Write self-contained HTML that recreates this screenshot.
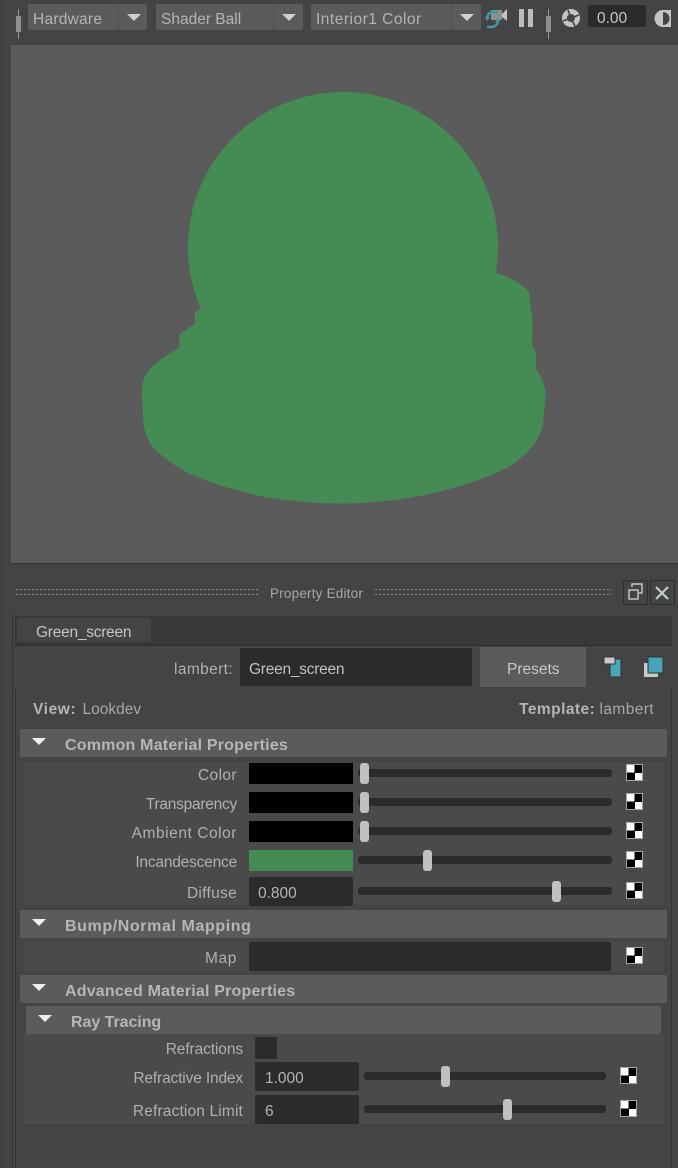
<!DOCTYPE html>
<html><head><meta charset="utf-8"><style>
html,body{margin:0;padding:0;background:#444}
#r{position:relative;width:678px;height:1168px;overflow:hidden;background:#444;font-family:"Liberation Sans",sans-serif;font-size:15.5px;color:#b4b4b4}
#r div{position:absolute}
.t{position:absolute;white-space:nowrap;line-height:20px;height:20px}
.l{text-align:right;color:#aeb0b2}
.b{font-weight:bold;font-size:16px;color:#b6b6b6}
.h{background:#5b5b5b;border-radius:2px;left:20px;width:647px;height:28px}
.a{width:0;height:0;border-left:7px solid transparent;border-right:7px solid transparent;border-top:7px solid #eee}
.g{border-top-color:#cfcfcf}
.f{background:#2b2b2b;border-radius:2px}
.tr{background:#2b2b2b;border-radius:3px;height:8px}
.hd{background:#c0c0c0;border-radius:3px;width:9px;height:21px}
.c{width:15px;height:15px;margin:1px;background:linear-gradient(#fff,#fff) 0 0/7.5px 7.5px no-repeat,linear-gradient(#fff,#fff) 7.5px 7.5px/7.5px 7.5px no-repeat,#000;outline:1px solid #a5a5a5}
</style></head><body><div id="r">
<div style="left:1px;top:0;width:1px;height:1168px;background:#383838"></div>
<svg style="position:absolute;left:0;top:0" width="678" height="44">
<rect x="18" y="9" width="1" height="30" fill="#999"/><rect x="16" y="16" width="5" height="16" fill="#8f8f8f"/>
<rect x="548" y="9" width="1" height="30" fill="#999"/><rect x="546" y="16" width="5" height="16" fill="#8f8f8f"/>
</svg>
<div style="left:28px;top:4px;width:119px;height:26px;background:#5b5b5b;border-radius:2px"></div>
<div style="left:118px;top:4px;width:1px;height:26px;background:#4f4f4f"></div>
<div class="a g" style="left:127px;top:14px"></div>
<span class="t" style="left:33px;top:10px;letter-spacing:.25px">Hardware</span>
<div style="left:156px;top:4px;width:147px;height:26px;background:#5b5b5b;border-radius:2px"></div>
<div style="left:273px;top:4px;width:1px;height:26px;background:#4f4f4f"></div>
<div class="a g" style="left:282px;top:14px"></div>
<span class="t" style="left:161px;top:10px">Shader Ball</span>
<div style="left:311px;top:4px;width:170px;height:26px;background:#5b5b5b;border-radius:2px"></div>
<div style="left:451px;top:4px;width:1px;height:26px;background:#4f4f4f"></div>
<div class="a g" style="left:460px;top:14px"></div>
<span class="t" style="left:316px;top:10px;letter-spacing:.5px">Interior1 Color</span>
<svg style="position:absolute;left:484px;top:6px" width="24" height="24">
<rect x="7" y="4" width="11" height="10" fill="#8f8f8f"/><path d="M18 8 L23 3 V15 L18 11Z" fill="#c4c4c4"/>
<path d="M3 12 Q4 6 10 6 H14" stroke="#3f9aa8" stroke-width="2.4" fill="none"/><path d="M14 15 Q13 21 7 21 H3" stroke="#3f9aa8" stroke-width="2.4" fill="none"/>
<path d="M1 11 H6 L3 15Z M11 16 H16 L14 12Z" fill="#3f9aa8"/>
</svg>
<div style="left:519px;top:9px;width:5px;height:18px;background:#bcbcbc"></div>
<div style="left:528px;top:9px;width:5px;height:18px;background:#bcbcbc"></div>
<svg style="position:absolute;left:561px;top:8px" width="20" height="20"><circle cx="10" cy="10" r="9" fill="#c4c4c4"/><path d="M10 10L7 2M10 10L18 7M10 10L14 18M10 10L2 13" stroke="#444" stroke-width="1.6"/><circle cx="10" cy="10" r="4" fill="#444"/></svg>
<div class="f" style="left:588px;top:5px;width:58px;height:22px"></div>
<span class="t" style="left:597px;top:9px;color:#c8c8c8">0.00</span>
<svg style="position:absolute;left:654px;top:8px" width="18" height="20"><rect x="9" y="2" width="8" height="17" fill="#c4c4c4"/><path d="M9 2a8.5 8.5 0 0 0 0 17z" fill="#c4c4c4"/><path d="M9 4a6.5 6.5 0 0 1 0 13z" fill="#444"/></svg>

<div style="left:11px;top:45px;width:667px;height:518px;background:#5b5b5b"></div>
<div style="left:11px;top:563px;width:667px;height:1px;background:#333"></div>
<svg style="position:absolute;left:0;top:0" width="678" height="520">
<circle cx="343" cy="247" r="155" fill="#448b54"/>
<path fill="#448b54" d="M200.3,309.3 L195,312 V324 Q186,329 179.3,335 V348 Q160,358 150,369 Q142,378 141.7,390 L143.5,423 Q145,436 152,446 Q164,460 190,474 Q222,488 265,497 Q310,504 345,503.5 Q385,503 425,495 Q475,484 507,468 Q530,453 538,438 Q543,428 543.5,420 L545.7,393 Q544,380 536,369 V353 L532,345 L532.7,323 L529,292 Q522,284 513,280 Q505,275 496,273 L440,260 H260Z"/>
</svg>

<svg style="position:absolute;left:0;top:585px" width="678" height="12">
<line x1="16" x2="258" y1="4.5" y2="4.5" stroke="#8a8a8a" stroke-dasharray="2 2"/><line x1="16" x2="258" y1="9.5" y2="9.5" stroke="#8a8a8a" stroke-dasharray="2 2"/>
<line x1="375" x2="612" y1="4.5" y2="4.5" stroke="#8a8a8a" stroke-dasharray="2 2"/><line x1="375" x2="612" y1="9.5" y2="9.5" stroke="#8a8a8a" stroke-dasharray="2 2"/>
</svg>
<span class="t" style="left:270px;top:584px;font-size:13.5px;color:#a8a8a8;letter-spacing:.2px">Property Editor</span>
<div style="left:623px;top:580px;width:23px;height:23px;border:1px solid #2e2e2e;border-radius:2px"></div>
<div style="left:650px;top:580px;width:23px;height:23px;border:1px solid #2e2e2e;border-radius:2px"></div>
<svg style="position:absolute;left:623px;top:580px" width="52" height="26" fill="none" stroke="#c4ccd0" stroke-width="1.4">
<rect x="6" y="10" width="9" height="9"/><path d="M9 7V4H19V13H16"/><path d="M33 7L45 19M45 7L33 19" stroke-width="2.2"/>
</svg>

<div style="left:12px;top:614px;width:1px;height:554px;background:#333"></div>
<div style="left:15px;top:689px;width:1px;height:479px;background:#333"></div>
<div style="left:671px;top:689px;width:1px;height:479px;background:#333"></div>
<div style="left:15px;top:616px;width:657px;height:29px;background:#383838"></div>
<div style="left:15px;top:645px;width:657px;height:1px;background:#2e2e2e"></div>
<div style="left:17px;top:618px;width:134px;height:24px;background:#444;border-radius:2px 2px 0 0"></div>
<span class="t" style="left:36px;top:623px;color:#c4c4c4;letter-spacing:-.25px">Green_screen</span>

<span class="t l" style="right:445px;top:660px;letter-spacing:.37px">lambert:</span>
<div class="f" style="left:240px;top:648px;width:232px;height:38px"></div>
<span class="t" style="left:249px;top:660px;color:#c0c0c0;letter-spacing:-.25px">Green_screen</span>
<div style="left:480px;top:647px;width:106px;height:40px;background:#5b5b5b"></div>
<span class="t" style="left:507px;top:660px;color:#c8c8c8">Presets</span>
<svg style="position:absolute;left:600px;top:652px" width="70" height="30">
<rect x="10" y="7" width="11" height="18" fill="#46a6b8" stroke="#333"/><rect x="4" y="5" width="11" height="7" fill="#c8c8c8" stroke="#333"/>
<rect x="44" y="11" width="14" height="14" fill="#c8c8c8"/><rect x="48" y="5" width="15" height="16" fill="#46a6b8" stroke="#333"/>
</svg>

<span class="t" style="left:33px;top:700px"><b style="letter-spacing:.6px;margin-right:2px">View:</b> <span style="color:#a8a8a8">Lookdev</span></span>
<span class="t" style="right:24px;top:700px"><b style="letter-spacing:.45px">Template:</b> <span style="color:#a8a8a8;letter-spacing:.4px">lambert</span></span>

<div class="h" style="top:729px"></div><div class="a" style="left:32px;top:738px"></div><span class="t b" style="left:65px;top:736px;letter-spacing:.2px">Common Material Properties</span>
<div style="left:24px;top:762px;width:640px;height:143px;background:#4a4a4a"></div>

<span class="t l" style="right:441px;top:766px;letter-spacing:.4px">Color</span>
<span class="t l" style="right:441px;top:795px;letter-spacing:-.25px">Transparency</span>
<span class="t l" style="right:441px;top:824px;letter-spacing:.55px">Ambient Color</span>
<span class="t l" style="right:441px;top:853px;letter-spacing:-.2px">Incandescence</span>
<span class="t l" style="right:441px;top:884px;letter-spacing:.3px">Diffuse</span>
<div style="left:249px;top:763px;width:104px;height:21px;background:#000"></div>
<div style="left:249px;top:792px;width:104px;height:21px;background:#000"></div>
<div style="left:249px;top:821px;width:104px;height:21px;background:#000"></div>
<div style="left:249px;top:850px;width:104px;height:21px;background:#448b54"></div>
<div class="f" style="left:249px;top:877px;width:104px;height:29px"></div>
<span class="t" style="left:258px;top:884px">0.800</span>
<div class="tr" style="left:358px;top:769px;width:254px"></div><div class="hd" style="left:360px;top:763px"></div>
<div class="tr" style="left:358px;top:798px;width:254px"></div><div class="hd" style="left:360px;top:792px"></div>
<div class="tr" style="left:358px;top:827px;width:254px"></div><div class="hd" style="left:360px;top:821px"></div>
<div class="tr" style="left:358px;top:856px;width:254px"></div><div class="hd" style="left:423px;top:850px"></div>
<div class="tr" style="left:358px;top:887px;width:254px"></div><div class="hd" style="left:552px;top:881px"></div>
<div class="c" style="left:626px;top:764px"></div>
<div class="c" style="left:626px;top:793px"></div>
<div class="c" style="left:626px;top:822px"></div>
<div class="c" style="left:626px;top:851px"></div>
<div class="c" style="left:626px;top:882px"></div>

<div class="h" style="top:910px"></div><div class="a" style="left:32px;top:919px"></div><span class="t b" style="left:65px;top:917px;letter-spacing:.6px">Bump/Normal Mapping</span>
<div style="left:24px;top:942px;width:640px;height:29px;background:#4a4a4a"></div>
<span class="t l" style="right:441px;top:949px;letter-spacing:.6px">Map</span>
<div class="f" style="left:249px;top:942px;width:362px;height:29px"></div>
<div class="c" style="left:626px;top:947px"></div>

<div class="h" style="top:975px"></div><div class="a" style="left:32px;top:984px"></div><span class="t b" style="left:65px;top:982px;letter-spacing:.19px">Advanced Material Properties</span>
<div style="left:24px;top:1034px;width:640px;height:90px;background:#4a4a4a"></div>
<div class="h" style="top:1006px;left:26px;width:635px"></div><div class="a" style="left:38px;top:1015px"></div><span class="t b" style="left:71px;top:1013px;letter-spacing:-.05px">Ray Tracing</span>
<span class="t l" style="right:435px;top:1040px;letter-spacing:-.1px">Refractions</span>
<span class="t l" style="right:435px;top:1069px;letter-spacing:-.15px">Refractive Index</span>
<span class="t l" style="right:435px;top:1102px;letter-spacing:.15px">Refraction Limit</span>
<div class="f" style="left:255px;top:1037px;width:22px;height:22px"></div>
<div class="f" style="left:255px;top:1062px;width:104px;height:29px"></div>
<span class="t" style="left:265px;top:1069px">1.000</span>
<div class="f" style="left:255px;top:1095px;width:104px;height:29px"></div>
<span class="t" style="left:265px;top:1102px">6</span>
<div class="tr" style="left:364px;top:1072px;width:242px"></div><div class="hd" style="left:441px;top:1066px"></div>
<div class="tr" style="left:364px;top:1105px;width:242px"></div><div class="hd" style="left:503px;top:1099px"></div>
<div class="c" style="left:620px;top:1067px"></div>
<div class="c" style="left:620px;top:1100px"></div>
</div></body></html>
